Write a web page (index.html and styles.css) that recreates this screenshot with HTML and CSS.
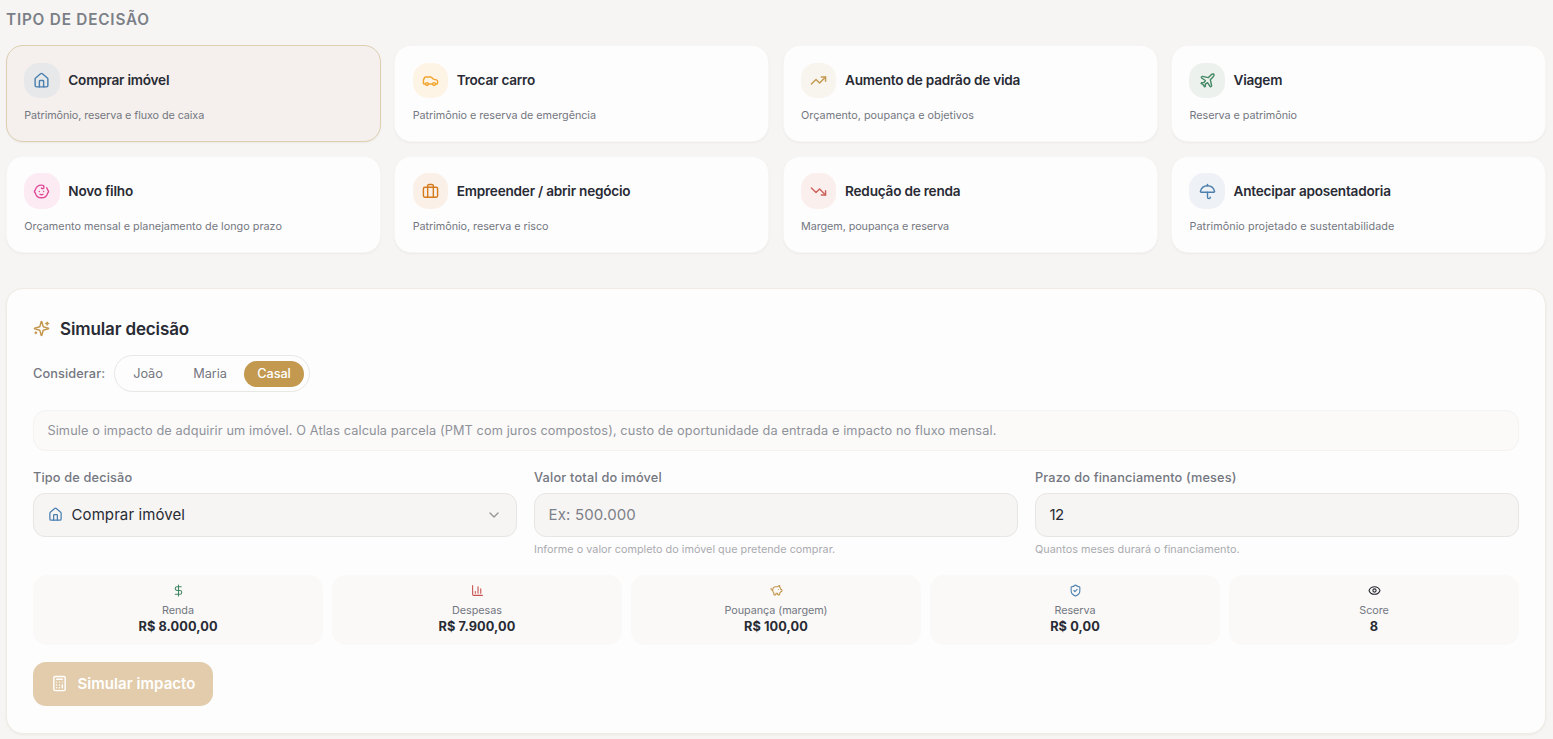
FILE: index.html
```html
<!DOCTYPE html>
<html lang="pt-BR">
<head>
<meta charset="utf-8">
<title>Simular decisão</title>
<link rel="stylesheet" href="styles.css">
</head>
<body>
<svg class="sprite" aria-hidden="true">
  <symbol id="house" viewBox="0 0 24 24"><path d="M15 21v-8a1 1 0 0 0-1-1h-4a1 1 0 0 0-1 1v8"/><path d="M3 10a2 2 0 0 1 .709-1.528l7-5.999a2 2 0 0 1 2.582 0l7 5.999A2 2 0 0 1 21 10v9a2 2 0 0 1-2 2H5a2 2 0 0 1-2-2z"/></symbol>
  <symbol id="car" viewBox="0 0 24 24"><path d="M19 17h2c.6 0 1-.4 1-1v-3c0-.9-.7-1.7-1.5-1.9C18.7 10.6 16 10 16 10s-1.3-1.4-2.2-2.3c-.5-.4-1.1-.7-1.8-.7H5c-.6 0-1.1.4-1.4.9l-1.4 2.9A3.7 3.7 0 0 0 2 12v4c0 .6.4 1 1 1h2"/><circle cx="7" cy="17" r="2"/><path d="M9 17h6"/><circle cx="17" cy="17" r="2"/></symbol>
  <symbol id="up" viewBox="0 0 24 24"><path d="M16 7h6v6"/><path d="m22 7-8.5 8.5-5-5L2 17"/></symbol>
  <symbol id="down" viewBox="0 0 24 24"><path d="M16 17h6v-6"/><path d="m22 17-8.5-8.5-5 5L2 7"/></symbol>
  <symbol id="plane" viewBox="0 0 24 24"><path d="M17.8 19.2 16 11l3.5-3.5C21 6 21.5 4 21 3c-1-.5-3 0-4.5 1.5L13 8 4.8 6.2c-.5-.1-.9.1-1.1.5l-.3.5c-.2.5-.1 1 .3 1.3L9 12l-2 3H4l-1 1 3 2 2 3 1-1v-3l3-2 3.5 5.3c.3.4.8.5 1.3.3l.5-.2c.4-.3.6-.7.5-1.2z"/></symbol>
  <symbol id="baby" viewBox="0 0 24 24"><path d="M10 16c.5.3 1.2.5 2 .5s1.5-.2 2-.5"/><path d="M15 12h.01"/><path d="M19.38 6.813A9 9 0 0 1 20.8 10.2a2 2 0 0 1 0 3.6 9 9 0 0 1-17.6 0 2 2 0 0 1 0-3.6A9 9 0 0 1 12 3c2 0 3.5 1.1 3.5 2.5s-.9 2.5-2 2.5c-.8 0-1.5-.4-1.5-1"/><path d="M9 12h.01"/></symbol>
  <symbol id="case" viewBox="0 0 24 24"><path d="M16 20V4a2 2 0 0 0-2-2h-4a2 2 0 0 0-2 2v16"/><rect x="2" y="6" width="20" height="14" rx="2"/></symbol>
  <symbol id="umbrella" viewBox="0 0 24 24"><path d="M12 13v7a2 2 0 0 0 4 0"/><path d="M12 2v2"/><path d="M20.992 13a1 1 0 0 0 .97-1.274 10.284 10.284 0 0 0-19.923 0A1 1 0 0 0 3 13z"/></symbol>
  <symbol id="sparkles" viewBox="0 0 24 24"><path d="M9.937 15.5A2 2 0 0 0 8.5 14.063l-6.135-1.582a.5.5 0 0 1 0-.962L8.5 9.936A2 2 0 0 0 9.937 8.5l1.582-6.135a.5.5 0 0 1 .963 0L14.063 8.5A2 2 0 0 0 15.5 9.937l6.135 1.581a.5.5 0 0 1 0 .964L15.5 14.063a2 2 0 0 0-1.437 1.437l-1.582 6.135a.5.5 0 0 1-.963 0z"/><path d="M20 3v4"/><path d="M22 5h-4"/><path d="M4 17v2"/><path d="M5 18H3"/></symbol>
  <symbol id="chevron" viewBox="0 0 24 24"><path d="m6 9 6 6 6-6"/></symbol>
  <symbol id="dollar" viewBox="0 0 24 24"><path d="M12 2v20"/><path d="M17 5H9.5a3.5 3.5 0 0 0 0 7h5a3.5 3.5 0 0 1 0 7H6"/></symbol>
  <symbol id="chart" viewBox="0 0 24 24"><path d="M3 3v16a2 2 0 0 0 2 2h16"/><path d="M18 17V9"/><path d="M13 17V5"/><path d="M8 17v-3"/></symbol>
  <symbol id="piggy" viewBox="0 0 24 24"><path d="M11 17h3v2a1 1 0 0 0 1 1h2a1 1 0 0 0 1-1v-3a3.16 3.16 0 0 0 2-2h1a1 1 0 0 0 1-1v-2a1 1 0 0 0-1-1h-1a5 5 0 0 0-2-4V3a4 4 0 0 0-3.2 1.6l-.3.4H11a6 6 0 0 0-6 6v1a5 5 0 0 0 2 4v3a1 1 0 0 0 1 1h2a1 1 0 0 0 1-1z"/><path d="M16 10h.01"/><path d="M2 8v1a2 2 0 0 0 2 2h1"/></symbol>
  <symbol id="shield" viewBox="0 0 24 24"><path d="M20 13c0 5-3.5 7.5-7.66 8.95a1 1 0 0 1-.67-.01C7.5 20.5 4 18 4 13V6a1 1 0 0 1 1-1c2 0 4.5-1.2 6.24-2.72a1.17 1.17 0 0 1 1.52 0C14.51 3.81 17 5 19 5a1 1 0 0 1 1 1z"/><path d="m9 12 2 2 4-4"/></symbol>
  <symbol id="eye" viewBox="0 0 24 24"><path d="M2.062 12.348a1 1 0 0 1 0-.696 10.75 10.75 0 0 1 19.876 0 1 1 0 0 1 0 .696 10.75 10.75 0 0 1-19.876 0"/><circle cx="12" cy="12" r="3"/></symbol>
  <symbol id="calc" viewBox="0 0 24 24"><rect width="16" height="20" x="4" y="2" rx="2"/><path d="M8 6h8"/><path d="M16 14v4"/><path d="M16 10h.01"/><path d="M12 10h.01"/><path d="M8 10h.01"/><path d="M12 14h.01"/><path d="M8 14h.01"/><path d="M12 18h.01"/><path d="M8 18h.01"/></symbol>
</svg>
<main class="page">
  <h2 class="section-title">TIPO DE DECISÃO</h2>
  <section class="cards">
    <article class="card selected"><div class="card-head"><span class="badge blue"><svg><use href="#house"/></svg></span><h3>Comprar imóvel</h3></div><p class="snug">Patrimônio, reserva e fluxo de caixa</p></article>
    <article class="card"><div class="card-head"><span class="badge amber"><svg><use href="#car"/></svg></span><h3>Trocar carro</h3></div><p class="close">Patrimônio e reserva de emergência</p></article>
    <article class="card"><div class="card-head"><span class="badge gold"><svg><use href="#up"/></svg></span><h3>Aumento de padrão de vida</h3></div><p class="open">Orçamento, poupança e objetivos</p></article>
    <article class="card"><div class="card-head"><span class="badge green"><svg><use href="#plane"/></svg></span><h3>Viagem</h3></div><p class="close">Reserva e patrimônio</p></article>
    <article class="card lower"><div class="card-head"><span class="badge pink"><svg><use href="#baby"/></svg></span><h3>Novo filho</h3></div><p class="open">Orçamento mensal e planejamento de longo prazo</p></article>
    <article class="card lower"><div class="card-head"><span class="badge orange"><svg><use href="#case"/></svg></span><h3>Empreender / abrir negócio</h3></div><p class="close">Patrimônio, reserva e risco</p></article>
    <article class="card lower"><div class="card-head"><span class="badge red"><svg><use href="#down"/></svg></span><h3>Redução de renda</h3></div><p class="snug">Margem, poupança e reserva</p></article>
    <article class="card lower"><div class="card-head"><span class="badge sky"><svg><use href="#umbrella"/></svg></span><h3>Antecipar aposentadoria</h3></div><p class="wide">Patrimônio projetado e sustentabilidade</p></article>
  </section>
  <section class="panel">
    <h2 class="panel-title"><svg><use href="#sparkles"/></svg>Simular decisão</h2>
    <div class="who"><span class="who-label">Considerar:</span>
      <div class="tabs"><button class="tab j">João</button><button class="tab m">Maria</button><button class="tab active">Casal</button></div>
    </div>
    <p class="info">Simule o impacto de adquirir um imóvel. O Atlas calcula parcela (PMT com juros compostos), custo de oportunidade da entrada e impacto no fluxo mensal.</p>
    <div class="fields">
      <div class="field"><label>Tipo de decisão</label><div class="control"><svg class="control-icon"><use href="#house"/></svg><span class="value">Comprar imóvel</span><svg class="chev"><use href="#chevron"/></svg></div></div>
      <div class="field"><label class="loose">Valor total do imóvel</label><div class="control"><span class="placeholder">Ex: 500.000</span></div><small>Informe o valor completo do imóvel que pretende comprar.</small></div>
      <div class="field"><label>Prazo do financiamento (meses)</label><div class="control"><span class="value number">12</span></div><small>Quantos meses durará o financiamento.</small></div>
    </div>
    <div class="stats">
      <div class="stat"><svg class="s-green"><use href="#dollar"/></svg><span class="k">Renda</span><strong>R$ 8.000,00</strong></div>
      <div class="stat"><svg class="s-red"><use href="#chart"/></svg><span class="k">Despesas</span><strong>R$ 7.900,00</strong></div>
      <div class="stat"><svg class="s-gold"><use href="#piggy"/></svg><span class="k">Poupança (margem)</span><strong>R$ 100,00</strong></div>
      <div class="stat"><svg class="s-blue"><use href="#shield"/></svg><span class="k">Reserva</span><strong>R$ 0,00</strong></div>
      <div class="stat"><svg class="s-dark"><use href="#eye"/></svg><span class="k">Score</span><strong>8</strong></div>
    </div>
    <button class="submit"><svg><use href="#calc"/></svg>Simular impacto</button>
  </section>
</main>
</body>
</html>
```
FILE: styles.css
```css
* { box-sizing: border-box; }
body { margin: 0; background: #f6f5f3; color: #282b34; font-family: Inter, "Noto Sans", sans-serif; height: 739px; overflow: hidden; }
h2, h3, p { margin: 0; }
button { font-family: inherit; border: 0; background: none; padding: 0; }
svg { fill: none; stroke: currentColor; stroke-width: 2; stroke-linecap: round; stroke-linejoin: round; flex: none; display: block; }
.sprite { position: absolute; width: 0; height: 0; }
.page { padding: 8px 7px 0 6px; }
.section-title { font-size: 15.3px; line-height: 23px; font-weight: 600; letter-spacing: 0.8px; color: #7b7f87; }
.cards { display: grid; grid-template-columns: repeat(4, 1fr); gap: 13.6px; margin-top: 14px; }
.card { height: 97px; border: 1px solid #f8f6f5; border-radius: 17px; background: #fefdfe; padding: 17px 17.3px; box-shadow: 0 1px 2px rgba(40, 35, 25, 0.05); }
.card.selected { background: #f5f0ed; border-color: #decfb0; }
.card-head { display: flex; align-items: center; gap: 8.6px; height: 35px; }
.card h3 { font-size: 13.6px; font-weight: 600; line-height: 21px; padding-bottom: 1px; letter-spacing: -0.22px; white-space: nowrap; }
.card.lower h3 { padding: 1px 0 0; }
.card p { margin-top: 9px; font-size: 10.8px; line-height: 17px; color: #737780; white-space: nowrap; }
.card .snug { letter-spacing: -0.08px; }
.card .close { letter-spacing: -0.04px; }
.card .open { letter-spacing: 0.02px; }
.card .wide { letter-spacing: 0.065px; }
.badge { width: 35.4px; height: 35.4px; border-radius: 15px; display: grid; place-items: center; }
.badge svg { width: 17px; height: 17px; }
.blue { color: #4a7fae; background: #e7e8ea; }
.amber { color: #f0a52c; background: #fef4e6; }
.gold { color: #c39a50; background: #f8f4ee; }
.green { color: #448763; background: #edf1ee; }
.pink { color: #df4b98; background: #fcebf3; }
.orange { color: #d57b1e; background: #faf0e7; }
.red { color: #cd625b; background: #faefed; }
.sky { color: #4a7fae; background: #eef1f5; }
.panel { margin-top: 35.9px; height: 446px; border: 1px solid #f0ebe3; border-radius: 17px; background: #fefdfe; padding: 26px; box-shadow: 0 1px 3px rgba(40, 35, 25, 0.05); }
.panel-title { display: flex; align-items: center; gap: 10px; height: 27px; font-size: 17px; font-weight: 600; letter-spacing: -0.13px; }
.panel-title svg { width: 17px; height: 17px; color: #c3964b; }
.who { display: flex; align-items: center; gap: 8px; margin-top: 13px; color: #737780; font-size: 12.75px; }
.who-label { font-weight: 500; width: 73px; letter-spacing: 0.1px; }
.tabs { display: flex; align-items: center; height: 37px; width: 196px; border: 1px solid #e9e7e4; border-radius: 19px; padding: 0 5px; }
.tab { height: 26px; border-radius: 13px; font-size: 12.75px; letter-spacing: -0.08px; color: #737780; }
.j { width: 56px; }
.m { width: 68px; }
.tab.active { width: 60px; color: #fff; background: #c3984f; font-weight: 500; }
.info { margin-top: 18px; height: 41px; border: 1px solid #f4f3f1; border-radius: 13px; background: #fbfaf9; padding: 0 13.4px; font-size: 12.75px; line-height: 39px; letter-spacing: 0.106px; color: #8f9299; white-space: nowrap; }
.fields { display: grid; grid-template-columns: repeat(3, 1fr); gap: 17px; margin-top: 17px; height: 89px; }
.field label { display: block; font-size: 12.75px; font-weight: 500; line-height: 19px; letter-spacing: 0.15px; color: #737780; }
.field .loose { letter-spacing: 0.2px; }
.control { display: flex; align-items: center; height: 44px; margin-top: 6px; border: 1px solid #e8e6e3; border-radius: 12px; background: #f6f5f3; padding: 0 13.5px 1px; font-size: 15px; }
.control-icon { width: 15px; height: 15px; margin-right: 9px; color: #4a7fae; }
.chev { width: 16px; height: 16px; margin-left: auto; margin-right: 1px; color: #969696; }
.value { letter-spacing: 0.09px; }
.number { letter-spacing: -0.6px; }
.placeholder { color: #7d8088; letter-spacing: 0.16px; }
.field small { display: block; margin-top: 4px; font-size: 10.8px; line-height: 17px; letter-spacing: 0.03px; color: #a9abaf; }
.stats { display: grid; grid-template-columns: repeat(5, 1fr); gap: 9px; margin-top: 18px; }
.stat { height: 70px; border-radius: 14px; background: #faf9f8; display: flex; flex-direction: column; align-items: center; padding-top: 9px; }
.stat svg { width: 13px; height: 13px; }
.k { margin-top: 5px; font-size: 10.8px; line-height: 17px; letter-spacing: -0.05px; color: #737780; }
.stat strong { font-size: 12.75px; line-height: 16px; font-weight: 700; letter-spacing: 0.09px; }
.s-green { color: #448763; }
.s-red { color: #c8504e; }
.s-gold { color: #c3964b; }
.s-blue { color: #4a7fae; }
.s-dark { color: #22252d; }
.submit { display: flex; align-items: center; margin-top: 17px; width: 180px; height: 44px; border-radius: 13px; background: #e2ccab; color: #fff; font-size: 15px; font-weight: 600; letter-spacing: 0.06px; padding: 0 0 1.4px 18.4px; gap: 9px; }
.submit svg { width: 17px; height: 17px; }
```
